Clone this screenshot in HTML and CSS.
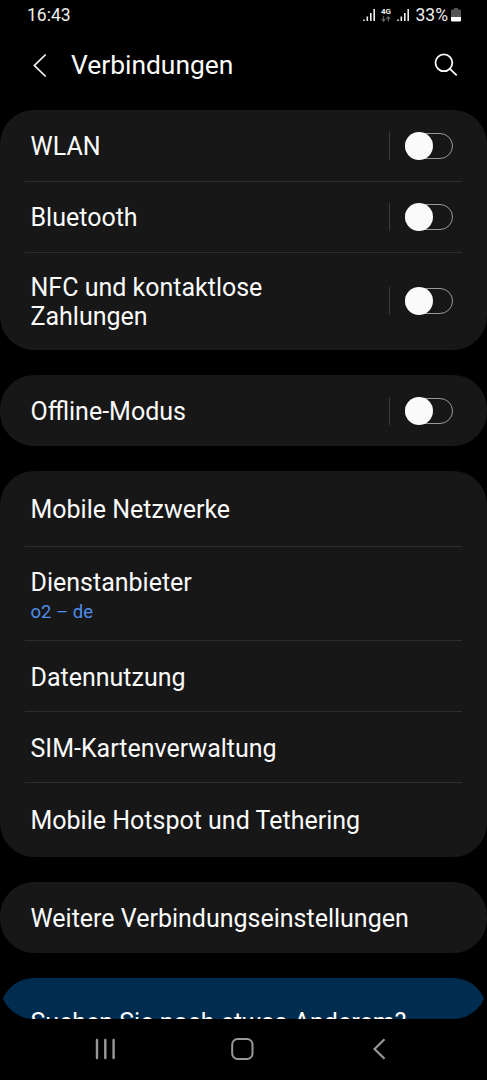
FILE: index.html
```html
<!DOCTYPE html>
<html lang="de">
<head>
<meta charset="utf-8">
<title>Verbindungen</title>
<link rel="stylesheet" href="styles.css">
</head>
<body>
<div class="screen">
  <div class="status">
    <span class="time">16:43</span>
    <div class="status-icons">
      <svg class="signal" width="13" height="14" viewBox="0 0 13 14" fill="none" stroke="#eee" stroke-width="1.6"><path d="M1 11.5v1.5M4.3 8.5V13M7.8 5V13M11.2 1V13"/></svg>
      <div class="net"><span>4G</span>
        <svg width="10" height="6" viewBox="0 0 10 6" fill="none" stroke="#666" stroke-width="1.2"><path d="M2.5 .2v5M.6 3.2l1.9 2 1.9-2M7.3 5.6V.7M5.4 2.8L7.3.8l1.9 2"/></svg>
      </div>
      <svg class="signal" width="13" height="14" viewBox="0 0 13 14" fill="none" stroke="#eee" stroke-width="1.6"><path d="M1 11.5v1.5M4.3 8.5V13M7.8 5V13M11.2 1V13"/></svg>
      <span class="percent">33%</span>
      <svg class="battery" width="10" height="14" viewBox="0 0 10 14"><path fill="#555" d="M3 0h4v1.5h2q1 0 1 1V9H0V2.500q0-1 1-1h2z"/><path fill="#fff" d="M0 9h10v3.500q0 1-1 1H1q-1 0-1-1z"/></svg>
    </div>
  </div>
  <header class="header">
    <svg class="back" width="14" height="25" viewBox="0 0 14 25" fill="none" stroke="#fafafa" stroke-width="1.7"><path d="M12.700 1.500L1.400 12.500L12.700 23.500"/></svg>
    <h1>Verbindungen</h1>
    <svg class="search" width="24" height="24" viewBox="0 0 24 24" fill="none" stroke="#fafafa" stroke-width="1.8"><circle cx="9.900" cy="9.800" r="8.400"/><path d="M15.900 15.800L22.700 22.300"/></svg>
  </header>
  <main class="content">
    <section class="card">
      <div class="row"><span>WLAN</span><div class="control"><i class="toggle"></i></div></div>
      <div class="row bluetooth"><span>Bluetooth</span><div class="control"><i class="toggle"></i></div></div>
      <div class="row nfc"><span>NFC und kontaktlose<br>Zahlungen</span><div class="control"><i class="toggle"></i></div></div>
    </section>
    <section class="card">
      <div class="row"><span>Offline-Modus</span><div class="control"><i class="toggle"></i></div></div>
    </section>
    <section class="card">
      <div class="row first"><span>Mobile Netzwerke</span></div>
      <div class="row provider"><span>Dienstanbieter<small>o2 – de</small></span></div>
      <div class="row"><span>Datennutzung</span></div>
      <div class="row"><span>SIM-Kartenverwaltung</span></div>
      <div class="row last"><span>Mobile Hotspot und Tethering</span></div>
    </section>
    <section class="card">
      <div class="row"><span>Weitere Verbindungseinstellungen</span></div>
    </section>
    <section class="card suggestion">
      <div class="row"><span>Suchen Sie noch etwas Anderem?</span></div>
    </section>
  </main>
  <nav class="nav">
    <svg width="20" height="22" viewBox="0 0 20 22" stroke="#999" stroke-width="2.400" stroke-linecap="round"><path d="M2 2v18M10.300 2v18M18.600 2v18"/></svg>
    <svg class="home" width="23" height="22" viewBox="0 0 23 22" fill="none" stroke="#999" stroke-width="2"><rect x="1.200" y="1" width="20.300" height="20" rx="5.500"/></svg>
    <svg width="13" height="22" viewBox="0 0 13 22" fill="none" stroke="#999" stroke-width="2.200"><path d="M11.500 1.200L1.500 11L11.500 20.800"/></svg>
  </nav>
</div>
</body>
</html>
```
FILE: styles.css
```css
* { box-sizing: border-box; }
body {
  margin: 0;
  background: #000;
  color: #fafafa;
  font-family: Roboto, sans-serif;
}
.screen {
  width: 487px;
  height: 1080px;
  display: flex;
  flex-direction: column;
  overflow: hidden;
}
.status {
  height: 30px;
  padding: 0 26px 0 27px;
  display: flex;
  justify-content: space-between;
  align-items: center;
  font-size: 17.5px;
  line-height: 30px;
  color: #eee;
}
.status-icons { display: flex; align-items: center; }
.net {
  display: flex;
  flex-direction: column;
  align-items: center;
  width: 11px;
  margin: 0 5px;
  font-size: 8px;
  font-weight: 700;
  line-height: 8px;
}
.net svg { display: block; }
.percent { margin: 0 3px 0 6px; }
.header {
  height: 80px;
  padding: 0 29px 10px 33px;
  display: flex;
  align-items: center;
}
.header h1 {
  flex: 1;
  margin: 0 0 0 24px;
  font-size: 26.4px;
  font-weight: 400;
  line-height: 30px;
}
.search { margin-bottom: 1px; }
.content {
  height: 909px;
  display: flex;
  flex-direction: column;
  gap: 25px;
  overflow: hidden;
  border-radius: 0 0 34px 34px;
}
.card {
  flex: none;
  padding: 0 25px;
  background: #171717;
  border-radius: 34px;
}
.row {
  height: 71px;
  padding: 22px 9px 19px 5.5px;
  display: flex;
  justify-content: space-between;
  align-items: flex-start;
  font-size: 25px;
  line-height: 29px;
  white-space: nowrap;
}
.row + .row { border-top: 1px solid #2d2d2d; }
.row small {
  display: block;
  margin-top: 3px;
  font-size: 18.5px;
  line-height: 24px;
  color: #4d8eea;
}
.bluetooth { padding-top: 21px; }
.nfc { height: 98px; padding-top: 20px; }
.nfc .control { margin-top: 14px; }
.first { height: 75px; padding-top: 24px; }
.provider { height: 94px; padding-top: 21px; }
.last { height: 75px; padding-top: 23px; }
.control {
  width: 64px;
  height: 28px;
  padding-left: 15px;
  display: flex;
  align-items: center;
  border-left: 1px solid #3c3c3c;
}
.toggle {
  width: 48px;
  height: 26px;
  border: 1px solid #999;
  border-radius: 13px;
  display: flex;
  align-items: center;
}
.toggle::before {
  content: "";
  flex: none;
  width: 28px;
  height: 28px;
  margin-left: -1px;
  border-radius: 50%;
  background: #fafafa;
}
.suggestion { background: #002c4f; }
.suggestion .row { padding-top: 30px; color: #fff; }
.nav {
  height: 61px;
  padding: 0 101px 2px 95px;
  display: flex;
  align-items: center;
  justify-content: space-between;
}
.home { margin-right: 3px; }
```
